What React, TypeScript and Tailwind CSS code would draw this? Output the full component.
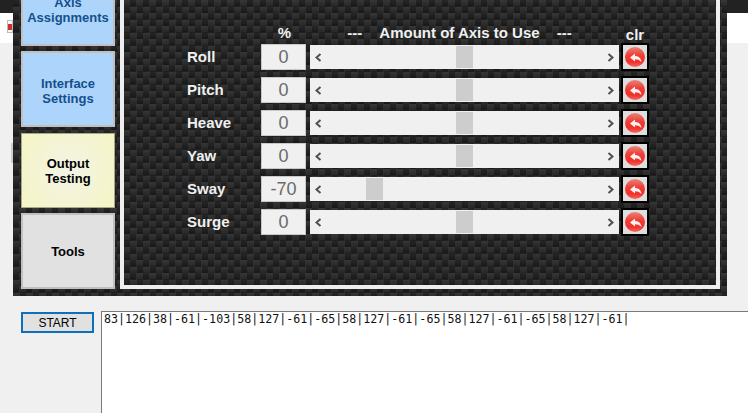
import { Fragment } from "react";

const axes = [
  { name: "Roll", value: 0 },
  { name: "Pitch", value: 0 },
  { name: "Heave", value: 0 },
  { name: "Yaw", value: 0 },
  { name: "Sway", value: -70 },
  { name: "Surge", value: 0 },
];

const carbon =
  "bg-[linear-gradient(180deg,rgba(255,255,255,0.05),rgba(0,0,0,0.12)),conic-gradient(#2c2c2c_25%,#1b1b1b_0_50%,#2c2c2c_0_75%,#1b1b1b_0)] bg-[length:13px_6.5px,13px_13px]";

function ClearButton() {
  return (
    <button className="w-[28px] h-[28px] flex items-center justify-center bg-[#dedede] border-2 border-black">
      <svg width="20" height="20" viewBox="0 0 20 20">
        <defs>
          <linearGradient id="red" x1="0" y1="0" x2="0" y2="1">
            <stop offset="0%" stopColor="#e9837a" />
            <stop offset="40%" stopColor="#ee3f38" />
            <stop offset="75%" stopColor="#f0302a" />
            <stop offset="100%" stopColor="#f4685e" />
          </linearGradient>
        </defs>
        <circle cx="10" cy="10" r="10" fill="url(#red)" />
        <path d="M5 10.5 L10 6.5 V9 C13.5 9 16 11 16.5 15 C14.5 13 12.5 12.3 10 12.3 V14.5 Z" fill="#fff" fillOpacity="0.92" />
      </svg>
    </button>
  );
}

function AxisRow({ name, value }: { name: string; value: number }) {
  // thumb sits 146px in at zero, moves ~1.29px per percent
  const thumbLeft = 146 + value * (90 / 70);
  return (
    <div className="flex items-center h-[28px]">
      <div className="w-[74px] text-[15px] font-bold text-[#f0f0f0]">{name}</div>
      <div className="w-[45px] h-[26px] flex items-center justify-center bg-[#f0f0f0] border border-[#c8c8c8] text-[18px] text-[#6a6a6a]">
        {value}
      </div>
      <div className="relative ml-[4px] w-[309px] h-[24px] flex items-center justify-between px-[5px] bg-[#f0f0f0]">
        <svg width="7" height="9" viewBox="0 0 7 9">
          <path d="M5.5 1 L1.5 4.5 L5.5 8" fill="none" stroke="#505050" strokeWidth="2" />
        </svg>
        <svg width="7" height="9" viewBox="0 0 7 9">
          <path d="M1.5 1 L5.5 4.5 L1.5 8" fill="none" stroke="#505050" strokeWidth="2" />
        </svg>
        <div className="absolute top-[1px] w-[17px] h-[22px] bg-[#cdcdcd]" style={{ left: thumbLeft }} />
      </div>
      <div className="ml-[2px]">
        <ClearButton />
      </div>
    </div>
  );
}

function NavButton({ label, className, h }: { label: string[]; className: string; h: string }) {
  return (
    <button className={`${h} w-[94px] shrink-0 flex flex-col items-center justify-center text-[13px] leading-[15px] font-bold ${className}`}>
      {label.map((line) => (
        <Fragment key={line}>
          <span>{line}</span>
        </Fragment>
      ))}
    </button>
  );
}

export default function App() {
  return (
    <div className="w-[748px] h-[413px] overflow-hidden bg-[#f0f0f0] font-['Liberation_Sans',sans-serif]">
      <div className="flex h-[296px]">
        <div className="w-[13px] flex flex-col">
          <div className="h-[13px] bg-[#222]" />
          <div className="h-[30px] bg-white pt-[7px] pl-[7px]">
            <div className="w-[6px] h-[13px] flex items-center justify-center border border-[#bbb]">
              <div className="w-[4px] h-[6px] bg-[#d0302a]" />
            </div>
          </div>
          <div className="mt-[100px] ml-[11px] w-[2px] h-[20px] bg-[#ccc]" />
        </div>

        <div className={`w-[714px] h-[296px] flex gap-[5px] pl-[8px] pr-[7px] pb-[7px] ${carbon}`}>
          <div className="w-[94px] flex flex-col justify-end">
            <NavButton
              h="h-[76px]"
              label={["Axis", "Assignments"]}
              className="bg-[#add5fb] border-2 border-[#c0c0c0] text-[#14508c] pt-[3px]"
            />
            <div className="h-[5px] shrink-0" />
            <NavButton
              h="h-[76px]"
              label={["Interface", "Settings"]}
              className="bg-[#add5fb] border-2 border-[#c0c0c0] text-[#14508c] pt-[3px]"
            />
            <div className="h-[6px] shrink-0" />
            <NavButton
              h="h-[75px]"
              label={["Output", "Testing"]}
              className="bg-[radial-gradient(circle,#f3f3e6,#f5f5c4)] border border-[#a8a88c] text-black"
            />
            <div className="h-[5px] shrink-0" />
            <NavButton
              h="h-[76px]"
              label={["Tools"]}
              className="bg-[#e1e1e1] border-2 border-[#c0c0c0] text-black"
            />
          </div>

          <div className="w-[600px] border-4 border-t-0 border-[#eeeeee] pt-[24px] pl-[63px]">
            <div className="flex h-[19px] text-[15px] font-bold text-[#f0f0f0]">
              <div className="ml-[74px] w-[45px] pl-[2px] text-center leading-[18px]">%</div>
              <div className="ml-[4px] w-[309px] pr-[10px] flex justify-center gap-[17px] leading-[18px]">
                <span>---</span>
                <span>Amount of Axis to Use</span>
                <span>---</span>
              </div>
              <div className="ml-[2px] w-[28px] text-center leading-[22px]">clr</div>
            </div>
            <div className="flex flex-col gap-[5px]">
              {axes.map((a) => (
                <AxisRow key={a.name} name={a.name} value={a.value} />
              ))}
            </div>
          </div>
        </div>

        <div className="flex-1 flex flex-col">
          <div className="h-[13px] bg-[#222]" />
          <div className="h-[30px] bg-white" />
        </div>
      </div>

      <div className="flex pt-[15px] pl-[21px]">
        <button className="mt-[1px] w-[73px] h-[21px] flex items-center justify-center bg-[#e1e1e1] border-2 border-[#0f6fb8] text-[12px] text-black">
          START
        </button>
        <div className="ml-[7px] flex-1 h-[102px] bg-white border border-[#7a7a7a] border-r-0 border-b-0 pl-[2px] font-['DejaVu_Sans_Mono',monospace] text-[11.65px] leading-[14px] text-[#111]">
          83|126|38|-61|-103|58|127|-61|-65|58|127|-61|-65|58|127|-61|-65|58|127|-61|
        </div>
      </div>
    </div>
  );
}
